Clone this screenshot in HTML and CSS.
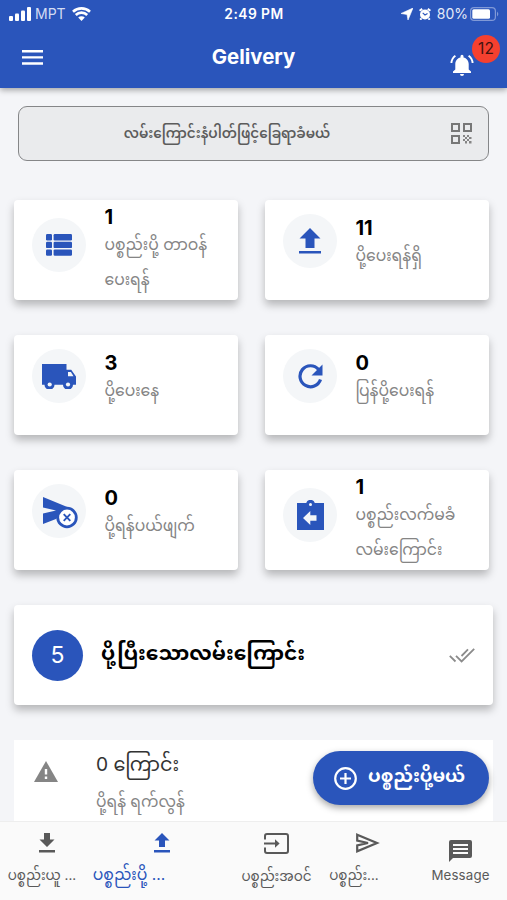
FILE: index.html
```html
<!DOCTYPE html>
<html lang="my">
<head>
<meta charset="utf-8">
	<title>Gelivery</title>
	<link rel="stylesheet" href="styles.css">
</head>
<body>
	<div class="app">
		<header class="header">
			<div class="status">
				<div class="status_left">
					<svg class="signal" width="22" height="14" viewBox="0 0 22 14"><rect x="0" y="9" width="4" height="5" rx="1"/><rect x="6" y="6.500" width="4" height="7.500" rx="1"/><rect x="12" y="3.500" width="4" height="10.500" rx="1"/><rect x="18" y="0" width="4" height="14" rx="1"/></svg>
					<span class="carrier">MPT</span>
					<svg width="19" height="14" viewBox="0 0 19 14"><path d="M1 4.800a12.300 12.300 0 0 1 17 0M3.800 8a8 8 0 0 1 11.400 0" fill="none" stroke="#fff" stroke-width="2.600"/><path d="M6.200 10.600a4.600 4.600 0 0 1 6.600 0L9.500 14z"/></svg>
				</div>
				<div class="time">2:49 PM</div>
				<div class="status_right">
					<svg width="12" height="12" viewBox="0 0 12 12"><path d="M12 0L7 12 6 6.500 0 5.500z" stroke="#fff" stroke-width=".6"/></svg>
					<svg class="alarm" width="12" height="12" viewBox="0 0 12 12"><circle cx="6" cy="6.500" r="5"/><path d="M.6 2.800L3.200.9M11.400 2.800L8.800.9M2.500 10.400L1.200 11.700M9.500 10.400l1.300 1.300" stroke="#fff" stroke-width="2"/><path d="M3.700 4.800L6 7l2.500-1.500" fill="none" stroke="#2a55bb" stroke-width="1.100"/></svg>
					<span class="percent">80%</span>
					<svg width="29" height="14" viewBox="0 0 29 14"><rect x=".6" y=".6" width="24.800" height="12.800" rx="3.500" fill="none" stroke="#8099d7" stroke-width="1.200"/><rect x="2.300" y="2.300" width="17.700" height="9.400" rx="1.500"/><path d="M27 4.500q2.600 2.500 0 5z" fill="#8099d7"/></svg>
				</div>
			</div>
			<div class="bar">
				<svg class="menu" width="21" height="15" viewBox="0 0 21 15"><path d="M0 0h21v2.400H0zM0 6.200h21v2.400H0zM0 12.300h21v2.400H0z"/></svg>
				<h1 class="title">Gelivery</h1>
				<div class="bell">
					<svg width="24" height="24" viewBox="0 0 24 24"><path d="M12 23a2 2 0 0 0 2-2h-4a2 2 0 0 0 2 2zM18.700 16.500V11c0-3.400-2.200-5.800-5.200-6.500V3.300a1.500 1.500 0 0 0-3 0v1.200c-3 .7-5.200 3.100-5.200 6.500v5.500L3 18.600V20h18v-1.400z"/><path d="M5.400 2.700C3 4.400 1.600 7 1.400 10M18.600 2.700c2.400 1.700 3.800 4.300 4 7.300" fill="none" stroke="#fff" stroke-width="1.900"/></svg>
					<span class="badge">12</span>
				</div>
			</div>
		</header>

		<main class="content">
			<div class="search">
				<span class="search_text">လမ်းကြောင်းနံပါတ်ဖြင့်ခြေရာခံမယ်</span>
				<svg class="qr" width="21" height="21" viewBox="0 0 21 21"><path d="M1 1h7v7H1zM13 1h7v7h-7zM1 13h7v7H1z" fill="none" stroke="#777" stroke-width="2"/><path d="M12 12h2v2h-2zM16 12h2v2h-2zM14 14h2v2h-2zM18 14h2.500v2H18zM16 16h2v2h-2zM12 16h2v2h-2zM14 18h2v2.500h-2zM18 18h2.500v2.500H18z" fill="#858585"/></svg>
			</div>

			<div class="grid">
				<div class="card two_line">
					<div class="icon"><svg width="26" height="22" viewBox="0 0 26 22"><rect width="6" height="6.400" rx="1.200"/><rect x="7.600" width="18.400" height="6.400" rx="1.200"/><rect y="7.700" width="6" height="6.400" rx="1.200"/><rect x="7.600" y="7.700" width="18.400" height="6.400" rx="1.200"/><rect y="15.400" width="6" height="6.400" rx="1.200"/><rect x="7.600" y="15.400" width="18.400" height="6.400" rx="1.200"/></svg></div>
					<div class="info">
						<div class="num">1</div>
						<div class="label">ပစ္စည်းပို့ တာဝန်<br>ပေးရန်</div>
					</div>
				</div>
				<div class="card">
					<div class="icon"><svg width="22" height="26" viewBox="0 0 22 26"><path d="M11 0l10.500 10.500h-6V20h-9v-9.500h-6zM0 23h22v2.600H0z"/></svg></div>
					<div class="info">
						<div class="num">11</div>
						<div class="label">ပို့ပေးရန်ရှိ</div>
					</div>
				</div>
				<div class="card">
					<div class="icon truck"><svg width="34" height="25" viewBox="0 0 34 25"><path d="M0 0h24.500v5.800h4.700L34 12.400v8.400h-3A5 5 0 0 1 21 20.800h-8.500a5 5 0 0 1-10 0H0z"/><path d="M26 8h2.900l2.600 4.200H26z" fill="#f4f6f8"/><circle cx="7.700" cy="20.500" r="2.100" fill="#f4f6f8"/><circle cx="26" cy="20.500" r="2.100" fill="#f4f6f8"/></svg></div>
					<div class="info">
						<div class="num">3</div>
						<div class="label">ပို့ပေးနေ</div>
					</div>
				</div>
				<div class="card">
					<div class="icon"><svg width="25" height="25" viewBox="0 0 25 25"><path d="M20.500 5.400A10.500 10.500 0 1 0 22.500 15.500" fill="none" stroke="#2a55bb" stroke-width="3.200"/><path d="M24.500.5v11h-11z"/></svg></div>
					<div class="info">
						<div class="num">0</div>
						<div class="label">ပြန်ပို့ပေးရန်</div>
					</div>
				</div>
				<div class="card">
					<div class="icon cancel"><svg width="35" height="32" viewBox="0 0 35 32"><path d="M0 0l25.500 10.500L13 22 0 27V16.500l13-3-13-3z"/><circle cx="24" cy="20.500" r="9.300" fill="#fff" stroke="#2a55bb" stroke-width="2.800"/><path d="M20.700 17.200l6.600 6.600M27.300 17.200l-6.600 6.600" stroke="#2a55bb" stroke-width="1.900"/></svg></div>
					<div class="info">
						<div class="num">0</div>
						<div class="label">ပို့ရန်ပယ်ဖျက်</div>
					</div>
				</div>
				<div class="card two_line">
					<div class="icon clip"><svg width="27" height="30" viewBox="0 0 27 30"><path d="M0 3h9.200a4.500 4.500 0 0 1 8.600 0H27v27H0z"/><circle cx="13.500" cy="4.500" r="1.500" fill="#f4f6f8"/><path d="M6 18l7.300-7v4.200h6.200v5.600h-6.200V25z" fill="#f4f6f8"/></svg></div>
					<div class="info">
						<div class="num">1</div>
						<div class="label">ပစ္စည်းလက်မခံ<br>လမ်းကြောင်း</div>
					</div>
				</div>
			</div>

			<div class="card done">
				<div class="count">5</div>
				<div class="done_text">ပို့ပြီးသောလမ်းကြောင်း</div>
				<svg class="ticks" width="26" height="15" viewBox="0 0 26 15"><path d="M.8 7.800L6.500 13.500M7 7.800l5.600 5.700L25.200.9M12.500 8L19 1.400" fill="none" stroke="#8b8b8b" stroke-width="1.800"/></svg>
			</div>

			<div class="late">
				<svg class="warn" width="24" height="21" viewBox="0 0 24 21"><path d="M12 0l12 21H0z"/><path d="M12 8v5.500M12 15.500v2.500" stroke="#fff" stroke-width="2.400"/></svg>
				<div class="info">
					<div class="late_num">0 ကြောင်း</div>
					<div class="late_label">ပို့ရန် ရက်လွန်</div>
				</div>
			</div>
		</main>

		<div class="add_btn">
			<svg width="23" height="23" viewBox="0 0 23 23"><circle cx="11.500" cy="11.500" r="10.300" fill="none" stroke="#fff" stroke-width="2.200"/><path d="M11.500 6v11M6 11.500h11" stroke="#fff" stroke-width="2.200"/></svg>
			<span class="add_text">ပစ္စည်းပို့မယ်</span>
		</div>

		<nav class="tabs">
			<div class="tab tab_1">
				<svg width="16" height="20" viewBox="0 0 16 20"><path d="M5 0h6v6.500h4.500L8 14 .5 6.500H5zM0 17h16v2.400H0z"/></svg>
				<span>ပစ္စည်းယူ ...</span>
			</div>
			<div class="tab tab_2 active">
				<svg width="16" height="20" viewBox="0 0 16 20"><path d="M8 0l7.500 7.500H11V14H5V7.500H.5zM0 17h16v2.400H0z"/></svg>
				<span>ပစ္စည်းပို့ ...</span>
			</div>
			<div class="tab tab_3">
				<svg width="25" height="21" viewBox="0 0 25 21"><path d="M1 6.500V3q0-2 2-2h19q2 0 2 2v15q0 2-2 2H3q-2 0-2-2v-3.500" fill="none" stroke="#595959" stroke-width="2"/><path d="M0 9.600h11V6.300l4.600 4.200-4.600 4.200v-3.300H0z"/></svg>
				<span>ပစ္စည်းအဝင်</span>
			</div>
			<div class="tab tab_4">
				<svg width="24" height="20" viewBox="0 0 24 20"><path d="M1.200 1.700L21 10 1.200 18.300v-6L12 10 1.200 7.700z" fill="none" stroke="#595959" stroke-width="2.200"/></svg>
				<span>ပစ္စည်း...</span>
			</div>
			<div class="tab tab_5">
				<svg width="23" height="22" viewBox="0 0 23 22"><path d="M2 0h19q2 0 2 2v14q0 2-2 2H4l-4 4V2q0-2 2-2z"/><path d="M4 5h15M4 9h15M4 13h15" stroke="#fafafa" stroke-width="2"/></svg>
				<span class="msg">Message</span>
			</div>
		</nav>
	</div>
</body>
</html>
```
FILE: styles.css
```css
body,h1{padding: 0;margin: 0;}
body{font-family: Inter,"Noto Sans Myanmar","Noto Sans","Liberation Sans",sans-serif;background-color: #f4f5f8;}
svg{display: block;flex: none;fill: #2a55bb;}

.app{display: flex;flex-direction: column;position: relative;width: 507px;height: 900px;overflow: hidden;}

/* header */
.header{flex: none;height: 88px;background-color: #2a55bb;color: #fff;box-shadow: 0 2px 6px rgba(0,0,0,.35);z-index: 1;}
.header svg{fill: #fff;}
.status{display: grid;grid-template-columns: 1fr auto 1fr;align-items: center;height: 27px;padding: 0 8px 0 9px;}
.status_left{display: flex;align-items: center;}
.carrier{margin: 0 6px 0 4px;font-size: 14px;color: #d3dcf3;}
.time{font-size: 13.800px;font-weight: 600;letter-spacing: .45px;}
.status_right{display: flex;justify-content: flex-end;align-items: center;}
.alarm{margin: 0 6px 0 6px;}
.percent{margin-right: 2px;font-size: 14px;color: #e4eaf8;}
.bar{display: grid;grid-template-columns: 1fr auto 1fr;align-items: center;height: 60px;padding: 0 7px;}
.menu{margin-left: 15px;}
.title{font-size: 20.400px;line-height: 24px;font-weight: 700;}
.bell{display: flex;position: relative;justify-self: end;padding: 16px 26px 0 0;}
.badge{position: absolute;right: 0;top: -2px;width: 28px;height: 28px;border-radius: 50%;background-color: #f5402f;color: #43130f;font-size: 15.500px;line-height: 28px;text-align: center;}

/* content */
.content{flex: 1;min-height: 0;overflow: hidden;padding: 18px 14px 0;}
.search{display: flex;align-items: center;box-sizing: border-box;height: 55px;margin: 0 4px 39px;padding: 0 16px;border: 1.500px solid #858688;border-radius: 9px;background-color: #eaebed;}
.search_text{flex: 1;padding: 3px 45px 0 13px;text-align: center;font-size: 13.600px;font-weight: 600;color: #5c5c5c;white-space: nowrap;}

.grid{display: grid;grid-template-columns: 224px 224px;gap: 35px 27px;}
.card{display: flex;box-sizing: border-box;height: 100px;padding: 14px 0 0 18px;border-radius: 4px;background-color: #fff;box-shadow: 0 5px 9px rgba(0,0,0,.26);}
.icon{display: flex;flex: none;align-items: center;justify-content: center;width: 54px;height: 54px;border-radius: 50%;background-color: #f4f6f8;}
.cancel svg{margin: 4px 0 0 2px;}
.two_line{padding-top: 18px;}
.info{margin-left: 18.500px;white-space: nowrap;}
.num{height: 23px;margin-top: 2px;font-size: 20px;line-height: 25px;font-weight: 700;}
.two_line .num{margin-top: -13px;}
.label{font-size: 15.600px;line-height: 34.500px;color: #858585;}

.done{align-items: center;margin-top: 35px;padding: 0 18px;}
.count{width: 51px;height: 51px;border-radius: 50%;background-color: #2a55bb;color: #fff;font-size: 23px;line-height: 51px;text-align: center;}
.done_text{flex: 1;margin-left: 18px;font-size: 20.250px;font-weight: 700;white-space: nowrap;}

.late{display: flex;height: 100px;margin-top: 35px;padding-left: 20px;background-color: #fff;}
.warn{margin-top: 21px;fill: #858585;}
.late .info{margin-left: 38px;}
.late_num{height: 43px;font-size: 19.200px;line-height: 49px;color: #333;}
.late_label{font-size: 15.500px;line-height: 38px;color: #858585;}

.add_btn{display: flex;position: absolute;right: 18px;bottom: 95px;align-items: center;box-sizing: border-box;width: 176px;height: 54px;padding-left: 20.500px;border-radius: 27px;background-color: #2a55bb;color: #fff;box-shadow: 0 3px 7px rgba(0,0,0,.35);z-index: 2;}
.add_text{margin-left: 11.500px;font-size: 18.100px;font-weight: 700;white-space: nowrap;}

/* bottom tabs */
.tabs{display: grid;grid-template-columns: 84px 156px 73px 110px 84px;flex: none;box-sizing: border-box;height: 79px;border-top: 1px solid #eee;background-color: #fafafa;z-index: 1;}
.tab{display: flex;flex-direction: column;align-items: center;padding-top: 11px;font-size: 13.500px;line-height: 24px;color: #595959;white-space: nowrap;}
.tab svg{fill: #595959;}
.tab span{margin-top: 10px;}
.tab_1 svg{margin-left: 10px;}
.tab_2 span{margin-right: 66px;}
.tab_4 span{margin-right: 28px;}
.tab_5{padding: 18px 9px 0 0;}
.tab_5 span{margin-top: 1px;}
.active{font-size: 15.700px;color: #2a55bb;}
.tab.active svg{fill: #2a55bb;}
.msg{font-size: 13.300px;letter-spacing: .15px;}
```
